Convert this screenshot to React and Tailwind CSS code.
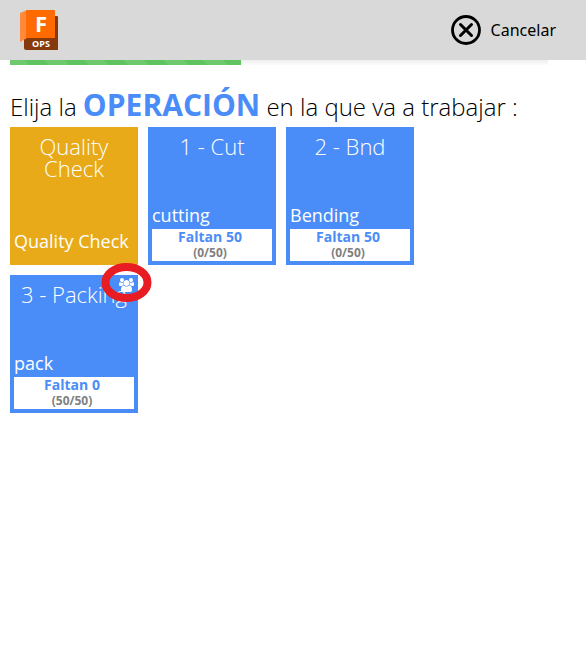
function LogoIcon() {
  return (
    <svg width="40" height="46" viewBox="0 -3 40 46" role="img" aria-label="Fusion Operations">
      <path d="M5 27 L35 6 H37 Q38 6 38 7 V40 H6 Q4 40 4 38 V29 Z" fill="#86390a" />
      <path d="M0 3 L7 0 V28 L0 32 Z" fill="#ff8a3c" />
      <path d="M7 0 H34 Q35 0 35 1 V28 H6 V1 Z" fill="#ff6b00" />
      <text x="21" y="22" textAnchor="middle" fontFamily="Open Sans, sans-serif" fontWeight="700" fontSize="22" fill="#fff">F</text>
      <text x="21" y="37" textAnchor="middle" fontFamily="Open Sans, sans-serif" fontWeight="700" fontSize="9" fill="#fff">OPS</text>
    </svg>
  );
}

function CancelIcon() {
  return (
    <svg width="30" height="30" viewBox="0 0 30 30" fill="none" stroke="#000" aria-hidden="true">
      <circle cx="15" cy="15" r="13.5" strokeWidth="2.8" />
      <path d="M9.5 9.5 L20.5 20.5 M20.5 9.5 L9.5 20.5" strokeWidth="3" strokeLinecap="round" />
    </svg>
  );
}

function UsersIcon() {
  return (
    <svg width="15" height="14" viewBox="0 0 1920 1792" fill="#fff" aria-hidden="true">
      <path d="M593 896q-162 5-265 128h-134q-82 0-138-40.5t-56-118.5q0-353 124-353 6 0 43.5 21t97.5 42.5 119 21.5q67 0 133-23-5 37-5 66 0 159 93 256zm1071 637q0 120-73 189.5t-194 69.5h-874q-121 0-194-69.5t-73-189.5q0-53 3.5-103.5t14-109 26.5-108.5 43-97.5 62-81 85.5-53.5 111.5-20q10 0 43 21.5t73 48 107 48 135 21.5 135-21.5 107-48 73-48 43-21.5q61 0 111.5 20t85.5 53.5 62 81 43 97.5 26.5 108.5 14 109 3.5 103.5zm-1024-1277q0 106-75 181t-181 75-181-75-75-181 75-181 181-75 181 75 75 181zm704 384q0 159-112.5 271.5t-271.5 112.5-271.5-112.5-112.5-271.5 112.5-271.5 271.5-112.5 271.5 112.5 112.5 271.5zm576 225q0 78-56 118.5t-138 40.5h-134q-103-123-265-128 93-97 93-256 0-29-5-66 66 23 133 23 59 0 119-21.5t97.5-42.5 43.5-21q124 0 124 353zm-128-609q0 106-75 181t-181 75-181-75-75-181 75-181 181-75 181 75 75 181z" />
    </svg>
  );
}

const operations = [
  { title: "Quality Check", name: "Quality Check", color: "bg-[#e8aa18]" },
  { title: "1 - Cut", name: "cutting", left: "Faltan 50", count: "(0/50)", color: "bg-[#4b8df8]" },
  { title: "2 - Bnd", name: "Bending", left: "Faltan 50", count: "(0/50)", color: "bg-[#4b8df8]" },
  { title: "3 - Packing", name: "pack", left: "Faltan 0", count: "(50/50)", color: "bg-[#4b8df8]", shared: true },
];

function Tile({ op }) {
  return (
    <button type="button" className={`relative flex h-[138px] w-32 flex-col p-1 text-white ${op.color}`}>
      <span className="w-full pt-1 text-center text-[22px] leading-[22px] font-light">{op.title}</span>
      <span className={`mt-auto text-left text-lg leading-6 font-medium whitespace-nowrap ${op.left ? "pb-0.5" : "pb-2"}`}>
        {op.name}
      </span>
      {op.left && (
        <span className="flex h-8 w-full flex-col bg-white pr-1 text-center font-bold">
          <span className="text-sm leading-4 text-[#4b8df8]">{op.left}</span>
          <span className="text-xs leading-4 text-[#808080]">{op.count}</span>
        </span>
      )}
      {op.shared && (
        <>
          <span className="absolute top-[3px] right-1">
            <UsersIcon />
          </span>
          <svg className="absolute -top-3 -right-3.5" width="52" height="40" viewBox="0 0 52 40" fill="none" aria-hidden="true">
            <ellipse cx="26.5" cy="19.5" rx="21" ry="15.5" stroke="#e81c23" strokeWidth="8" />
          </svg>
        </>
      )}
    </button>
  );
}

export default function App() {
  return (
    <div className="min-h-screen bg-white font-['Open_Sans',sans-serif] text-black">
      <header className="flex h-[60px] items-center justify-between bg-[#d9d9d9] pr-[30px] pl-5">
        <LogoIcon />
        <button type="button" className="flex items-center gap-2.5 font-['Noto_Sans',sans-serif] text-base">
          <CancelIcon />
          Cancelar
        </button>
      </header>
      <div className="mr-[38px] ml-2.5 h-[5px] bg-linear-to-b from-[#efefef] to-[#fcfcfc]">
        <div className="h-full w-[43%] bg-[#5fc45f] bg-[repeating-linear-gradient(45deg,#6fca6f_0_14px,#5fc45f_14px_28px)]" role="progressbar" aria-valuenow={43} aria-valuemin={0} aria-valuemax={100} aria-label="Progreso" />
      </div>
      <main className="px-2.5">
        <h1 className="pt-5 text-2xl leading-10 font-light">
          Elija la <strong className="text-[30px] font-bold text-[#4b8df8]">OPERACIÓN</strong> en la que va a trabajar :
        </h1>
        <div className="flex max-w-[480px] flex-wrap gap-2.5">
          {operations.map((op) => (
            <Tile key={op.title} op={op} />
          ))}
        </div>
      </main>
    </div>
  );
}
